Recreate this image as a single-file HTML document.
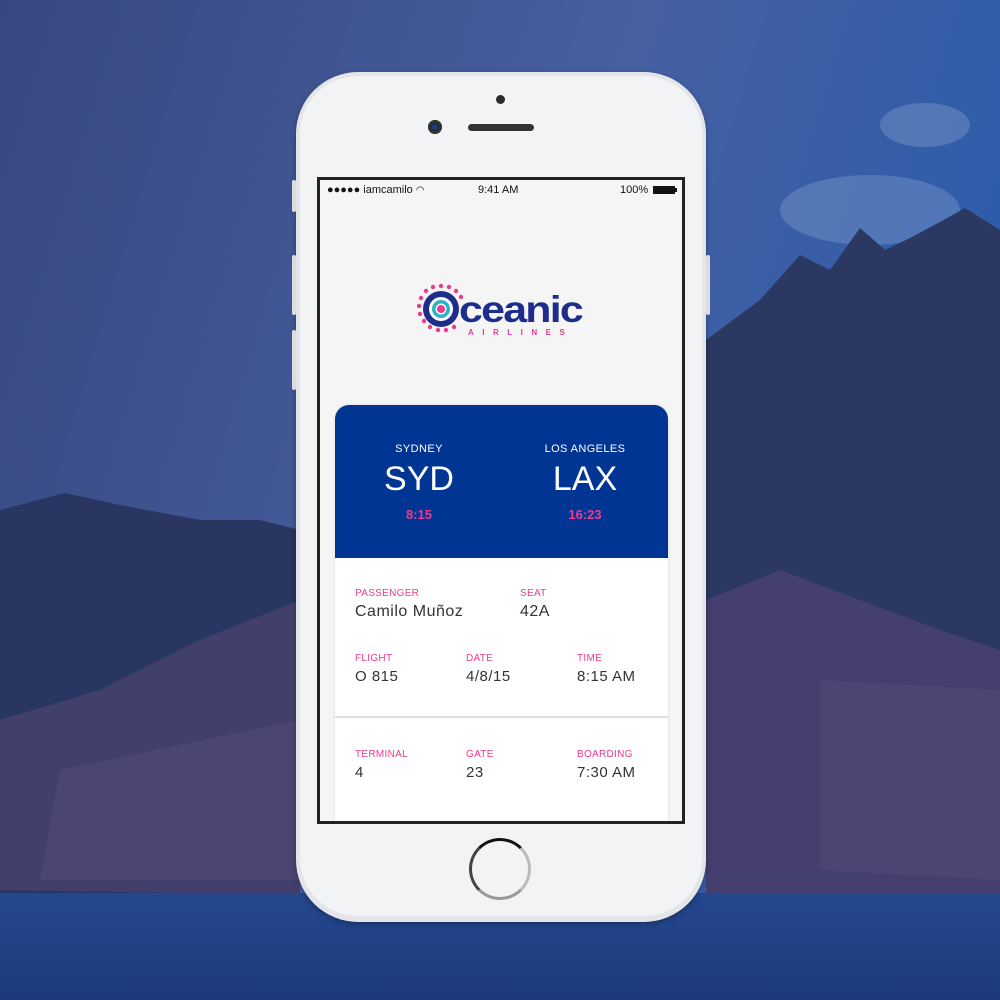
<!DOCTYPE html>
<html><head><meta charset="utf-8"><style>
*{margin:0;padding:0;box-sizing:border-box}
body{width:1000px;height:1000px;overflow:hidden;position:relative;font-family:"Liberation Sans",sans-serif;background:#33498a}
.abs{position:absolute}
.lbl{position:absolute;font-size:10px;color:#ec3b8f;letter-spacing:.3px}
.val{position:absolute;font-size:15px;color:#333;letter-spacing:.5px}
</style></head><body>
<svg class="abs" style="left:0;top:0" width="1000" height="1000" viewBox="0 0 1000 1000">
<defs>
<linearGradient id="sky" x1="0" y1="0" x2="1" y2="0.3"><stop offset="0" stop-color="#38477f"/><stop offset="0.6" stop-color="#4660a2"/><stop offset="1" stop-color="#2d5caa"/></linearGradient>
<linearGradient id="sea" x1="0" y1="0" x2="0" y2="1"><stop offset="0" stop-color="#25478e"/><stop offset="1" stop-color="#1c3a7c"/></linearGradient>
</defs>
<rect width="1000" height="1000" fill="url(#sky)"/>
<ellipse cx="870" cy="210" rx="90" ry="35" fill="#6f8fc6" opacity=".5"/>
<ellipse cx="925" cy="125" rx="45" ry="22" fill="#7b97c9" opacity=".45"/>
<path d="M0 510 L65 493 L120 505 L200 520 L260 520 L300 530 L300 900 L0 900Z" fill="#283661"/>
<path d="M0 720 L100 690 L200 640 L300 600 L300 895 L0 890Z" fill="#433f6c"/>
<path d="M60 770 L180 745 L300 720 L300 880 L40 880Z" fill="#524a78" opacity=".6"/>
<path d="M706 340 L760 300 L800 255 L830 270 L860 228 L885 250 L910 238 L940 222 L965 208 L1000 230 L1000 905 L706 905Z" fill="#2a3862"/>
<path d="M706 600 L780 570 L860 600 L940 630 L1000 650 L1000 905 L706 905Z" fill="#443f6e"/>
<path d="M820 680 L1000 690 L1000 880 L820 870Z" fill="#524a78" opacity=".6"/>
<rect y="893" width="1000" height="107" fill="url(#sea)"/>
</svg>

<!-- phone -->
<div class="abs" style="left:296px;top:72px;width:410px;height:850px;border-radius:62px;background:#e4e5e8;box-shadow:0 2px 6px rgba(0,0,0,.3)"></div>
<div class="abs" style="left:300px;top:76px;width:402px;height:840px;border-radius:58px;background:#f2f3f5"></div>
<div class="abs" style="left:292px;top:180px;width:4px;height:32px;background:#ddd;border-radius:2px"></div>
<div class="abs" style="left:292px;top:255px;width:4px;height:60px;background:#ddd;border-radius:2px"></div>
<div class="abs" style="left:292px;top:330px;width:4px;height:60px;background:#ddd;border-radius:2px"></div>
<div class="abs" style="left:706px;top:255px;width:4px;height:60px;background:#ddd;border-radius:2px"></div>
<div class="abs" style="left:496px;top:95px;width:9px;height:9px;border-radius:50%;background:#2a2a2a"></div>
<div class="abs" style="left:428px;top:120px;width:14px;height:14px;border-radius:50%;background:#222;box-shadow:inset 0 0 0 3px #333"><div style="margin:4px;width:6px;height:6px;border-radius:50%;background:#1a3d8a"></div></div>
<div class="abs" style="left:468px;top:124px;width:66px;height:7px;border-radius:4px;background:#333"></div>
<div class="abs" style="left:469px;top:838px;width:62px;height:62px;border-radius:50%;border:3px solid #333;border-color:#111 #bbb #999 #444;background:#f2f3f5"></div>

<!-- screen -->
<div class="abs" style="left:317px;top:177px;width:368px;height:647px;background:#222"></div>
<div class="abs" style="left:320px;top:180px;width:362px;height:641px;background:#f5f5f5;overflow:hidden">
  <div class="abs" style="left:7px;top:4px;font-size:11px;color:#111">●●●●● iamcamilo <span style="font-size:10px">◠</span></div>
  <div class="abs" style="left:158px;top:4px;font-size:11px;color:#111">9:41 AM</div>
  <div class="abs" style="left:300px;top:4px;font-size:11px;color:#111">100%</div>
  <div class="abs" style="left:333px;top:6px;width:22px;height:8px;background:#111"></div>
  <div class="abs" style="left:355px;top:8px;width:2px;height:4px;background:#111"></div>

  <!-- logo -->
  <svg class="abs" style="left:97px;top:103px" width="170" height="58" viewBox="0 0 170 58">
    <g fill="#ec3b8f">
      <circle cx="24" cy="3" r="2.2"/><circle cx="32" cy="4" r="2.2"/><circle cx="39" cy="8" r="2.2"/><circle cx="44" cy="14" r="2.2"/>
      <circle cx="16" cy="4" r="2.2"/><circle cx="9" cy="8" r="2.2"/><circle cx="4" cy="15" r="2.2"/><circle cx="2" cy="23" r="2.2"/>
      <circle cx="3" cy="31" r="2.2"/><circle cx="7" cy="38" r="2.2"/><circle cx="13" cy="44" r="2.2"/><circle cx="21" cy="47" r="2.2"/><circle cx="29" cy="47" r="2.2"/><circle cx="37" cy="44" r="2.2"/>
    </g>
    <circle cx="24" cy="26" r="18" fill="#1d2d8c"/>
    <circle cx="24" cy="26" r="12" fill="#fff"/>
    <circle cx="24" cy="26" r="9" fill="#2ab3c4"/>
    <circle cx="24" cy="26" r="5.5" fill="#fff"/>
    <circle cx="24" cy="26" r="4" fill="#ec3b8f"/>
    <text x="42" y="39" font-family="Liberation Sans" font-weight="bold" font-size="37" fill="#1d2d8c" letter-spacing="-1.5" textLength="123" lengthAdjust="spacingAndGlyphs">ceanic</text>
    <text x="51" y="52" font-family="Liberation Sans" font-weight="bold" font-size="8" fill="#ec3b8f" letter-spacing="8.5">AIRLINES</text>
  </svg>

  <!-- card -->
  <div class="abs" style="left:15px;top:225px;width:333px;height:450px;background:#fff;border-radius:14px 14px 0 0;overflow:hidden;box-shadow:0 0 3px rgba(0,0,0,.12)">
    <div class="abs" style="left:0;top:0;width:333px;height:153px;background:#003594"></div>
    <div class="abs" style="left:34px;top:38px;width:100px;text-align:center;color:#fff;font-size:11px;letter-spacing:.4px">SYDNEY</div>
    <div class="abs" style="left:34px;top:55px;width:100px;text-align:center;color:#fff;font-size:34px">SYD</div>
    <div class="abs" style="left:34px;top:102px;width:100px;text-align:center;color:#ec3b8f;font-size:13px;font-weight:bold">8:15</div>
    <div class="abs" style="left:190px;top:38px;width:120px;text-align:center;color:#fff;font-size:11px;letter-spacing:.4px">LOS ANGELES</div>
    <div class="abs" style="left:190px;top:55px;width:120px;text-align:center;color:#fff;font-size:34px">LAX</div>
    <div class="abs" style="left:190px;top:102px;width:120px;text-align:center;color:#ec3b8f;font-size:13px;font-weight:bold">16:23</div>

    <div class="lbl" style="left:20px;top:183px">PASSENGER</div>
    <div class="val" style="left:20px;top:198px;font-size:16px">Camilo Muñoz</div>
    <div class="lbl" style="left:185px;top:183px">SEAT</div>
    <div class="val" style="left:185px;top:198px;font-size:16px">42A</div>

    <div class="lbl" style="left:20px;top:248px">FLIGHT</div>
    <div class="val" style="left:20px;top:263px">O 815</div>
    <div class="lbl" style="left:131px;top:248px">DATE</div>
    <div class="val" style="left:131px;top:263px">4/8/15</div>
    <div class="lbl" style="left:242px;top:248px">TIME</div>
    <div class="val" style="left:242px;top:263px">8:15 AM</div>

    <div class="abs" style="left:0;top:311px;width:333px;height:2px;background:#ddd"></div>

    <div class="lbl" style="left:20px;top:344px">TERMINAL</div>
    <div class="val" style="left:20px;top:359px">4</div>
    <div class="lbl" style="left:131px;top:344px">GATE</div>
    <div class="val" style="left:131px;top:359px">23</div>
    <div class="lbl" style="left:242px;top:344px">BOARDING</div>
    <div class="val" style="left:242px;top:359px">7:30 AM</div>
  </div>
</div>
</body></html>
